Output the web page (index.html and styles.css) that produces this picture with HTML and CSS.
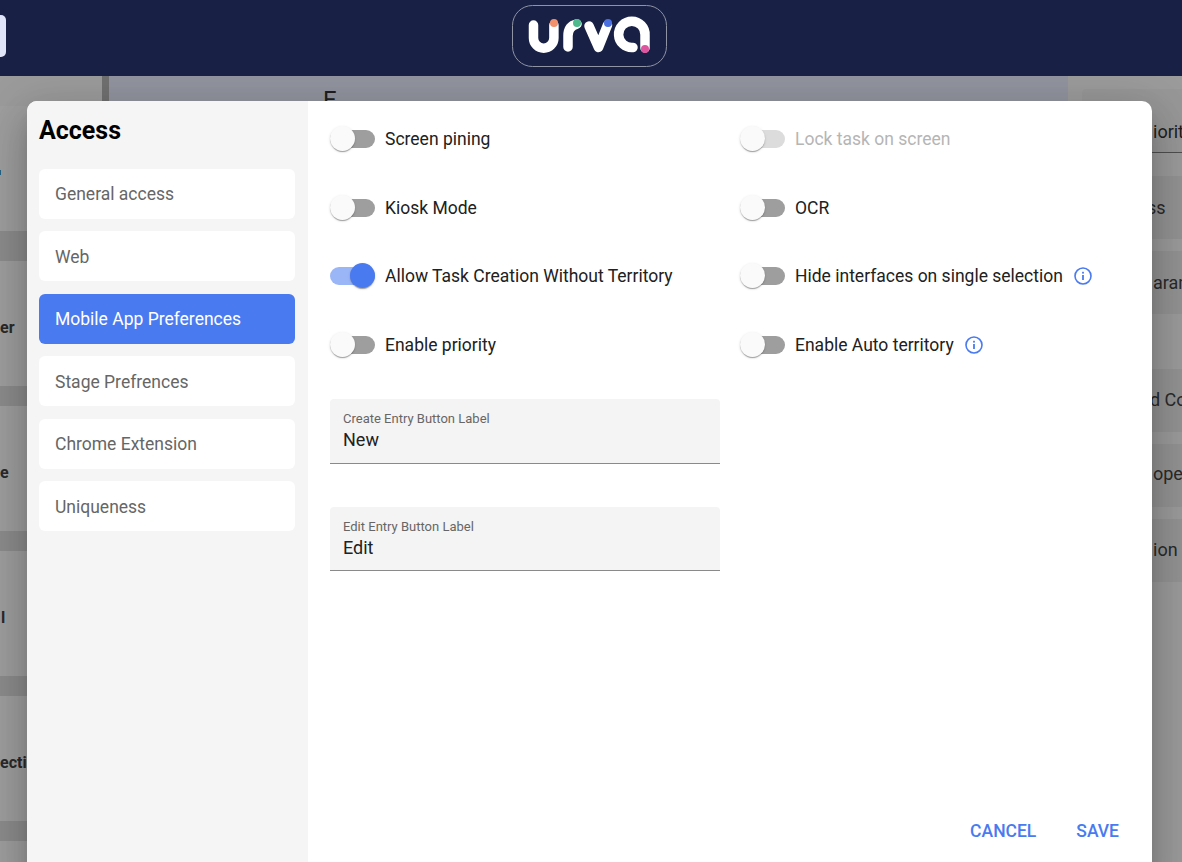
FILE: index.html
```html
<!DOCTYPE html>
<html lang="en">
<head>
<meta charset="utf-8">
<title>Access</title>
<link rel="stylesheet" href="styles.css">
</head>
<body>
<div class="page">
  <header class="topbar">
    <span class="menu-btn"></span>
    <div class="logo" role="img" aria-label="urva">
      <svg width="155" height="62" viewBox="512 5 155 62">
        <rect x="512.5" y="5.5" width="154" height="61" rx="20" fill="none" stroke="#8f93a3" stroke-width="1"/>
        <g fill="none" stroke="#fff" stroke-width="9.5" stroke-linecap="round" stroke-linejoin="round">
          <path d="M533.5 25V38a10.2 10.2 0 0 0 20.4 0V25"/>
          <path d="M568 47V36Q568 26 577 24"/>
          <path d="M589 26L598.500 47.500L607.500 25"/>
          <path d="M633 47.500A13.200 13.200 0 1 1 645 35V48"/>
        </g>
        <circle cx="554" cy="23" r="4" fill="#f2916c"/>
        <circle cx="577" cy="23" r="4" fill="#4fb98e"/>
        <circle cx="608" cy="23" r="4" fill="#4a6fe0"/>
        <circle cx="645" cy="49" r="4" fill="#dd559f"/>
      </svg>
    </div>
  </header>
  <div class="backdrop-content">
    <aside class="bg-left">
      <div class="bg-left-top"></div>
      <div class="bg-card first"><span class="tick"></span></div>
      <div class="bg-strip wide"></div>
      <div class="bg-card"><span>er</span></div>
      <div class="bg-strip"></div>
      <div class="bg-card"><span>e</span></div>
      <div class="bg-strip"></div>
      <div class="bg-card inset"><span>l</span></div>
      <div class="bg-strip"></div>
      <div class="bg-card"><span>ecti</span></div>
      <div class="bg-strip"></div>
      <div class="bg-card"></div>
    </aside>
    <div class="bg-divider"></div>
    <main class="bg-main"><h2 class="bg-heading">E</h2></main>
    <aside class="bg-right">
      <div class="bg-input">iorit</div>
      <div class="bg-band near">ss</div>
      <div class="bg-band gap-after">aram</div>
      <div class="bg-band shift up">d Co</div>
      <div class="bg-band up-more">ope</div>
      <div class="bg-band up">ion</div>
    </aside>
  </div>
  <div class="overlay"></div>

  <section class="modal">
    <nav class="side">
      <h1 class="side-title">Access</h1>
      <ul class="side-list">
        <li class="side-item">General access</li>
        <li class="side-item">Web</li>
        <li class="side-item active">Mobile App Preferences</li>
        <li class="side-item">Stage Prefrences</li>
        <li class="side-item">Chrome Extension</li>
        <li class="side-item">Uniqueness</li>
      </ul>
    </nav>
    <div class="content">
      <div class="switch-grid">
        <label class="row"><span class="switch"><i class="track"></i><i class="thumb"></i></span>Screen pining</label>
        <label class="row disabled"><span class="switch"><i class="track"></i><i class="thumb"></i></span>Lock task on screen</label>
        <label class="row"><span class="switch"><i class="track"></i><i class="thumb"></i></span>Kiosk Mode</label>
        <label class="row"><span class="switch"><i class="track"></i><i class="thumb"></i></span>OCR</label>
        <label class="row on"><span class="switch"><i class="track"></i><i class="thumb"></i></span>Allow Task Creation Without Territory</label>
        <label class="row"><span class="switch"><i class="track"></i><i class="thumb"></i></span>Hide interfaces on single selection
          <svg class="info" viewBox="0 0 18 18" width="18" height="18"><circle cx="9" cy="9" r="8" fill="none" stroke="#4a7af0" stroke-width="1.600"/><rect x="8.100" y="8" width="1.800" height="5" fill="#4a7af0"/><rect x="8.100" y="4.800" width="1.800" height="1.800" fill="#4a7af0"/></svg></label>
        <label class="row"><span class="switch"><i class="track"></i><i class="thumb"></i></span>Enable priority</label>
        <label class="row"><span class="switch"><i class="track"></i><i class="thumb"></i></span>Enable Auto territory
          <svg class="info" viewBox="0 0 18 18" width="18" height="18"><circle cx="9" cy="9" r="8" fill="none" stroke="#4a7af0" stroke-width="1.600"/><rect x="8.100" y="8" width="1.800" height="5" fill="#4a7af0"/><rect x="8.100" y="4.800" width="1.800" height="1.800" fill="#4a7af0"/></svg></label>
      </div>
      <div class="fields">
        <div class="field"><span class="field-label">Create Entry Button Label</span><span class="field-value">New</span></div>
        <div class="field"><span class="field-label">Edit Entry Button Label</span><span class="field-value">Edit</span></div>
      </div>
      <div class="actions">
        <button class="btn" type="button">CANCEL</button>
        <button class="btn" type="button">SAVE</button>
      </div>
    </div>
  </section>
</div>
</body>
</html>
```
FILE: styles.css
```css
* { box-sizing: border-box; }
html, body { margin: 0; padding: 0; height: 100%; overflow: hidden; }
body { font-family: Roboto, "Liberation Sans", sans-serif; color: #212121; background: #fff; }
.page { position: relative; width: 1182px; height: 862px; overflow: hidden; display: flex; flex-direction: column; }

.topbar { position: relative; z-index: 3; height: 76px; flex: none; background: #182145; display: flex; align-items: flex-start; justify-content: center; padding-right: 4px; }
.menu-btn { position: absolute; left: -20px; top: 15px; width: 26px; height: 42px; border-radius: 5px; background: #e0e5fa; }
.logo { margin-top: 5px; height: 62px; }
.logo svg { display: block; }

.backdrop-content { flex: 1; display: flex; min-height: 0; }
.bg-left { width: 102px; flex: none; display: flex; flex-direction: column; background: #fff; font-weight: 700; font-size: 16px; color: #444; }
.bg-left-top { height: 30px; flex: none; background: #fbfbfb; }
.bg-card { height: 125px; flex: none; display: flex; align-items: center; background: #fff; padding-top: 8px; overflow: hidden; }
.bg-card.inset { padding-left: 1px; }
.bg-card span { white-space: nowrap; }
.bg-card.first span.tick { width: 1px; height: 5px; background: #3aa0d8; }
.bg-strip { height: 20px; flex: none; background: #e2e2e2; }
.bg-strip.wide { height: 30px; }
.bg-divider { width: 7px; flex: none; background: #b5b5b5; }
.bg-main { flex: 1; background: #ebefff; padding: 14px 0 0 214px; }
.bg-heading { margin: 0; font-size: 24px; font-weight: 400; line-height: 20px; color: #333; }
.bg-right { width: 114px; flex: none; background: #fafafa; padding: 13px 0 0 14px; display: flex; flex-direction: column; font-size: 18px; color: #444; white-space: nowrap; overflow: hidden; }
.bg-input { height: 64px; flex: none; background: #f4f4f4; border-bottom: 1px solid #808080; border-radius: 4px 0 0 0; padding: 31px 0 0 71px; line-height: 24px; margin-bottom: 23px; color: #333; }
.bg-band { height: 63px; flex: none; background: #eeeeee; display: flex; align-items: center; padding-left: 71px; margin-bottom: 12px; }
.bg-band.near { padding-left: 65px; }
.bg-band.gap-after { margin-bottom: 55px; }
.bg-band.shift { padding-left: 68px; }
.bg-band.up { padding-bottom: 2px; }
.bg-band.up-more { padding-bottom: 4px; }

.overlay { position: absolute; left: 0; right: 0; top: 76px; bottom: 0; z-index: 1; background: rgba(0,0,0,.38); }

.modal { position: absolute; z-index: 2; left: 27px; top: 101px; width: 1125px; height: 790px; background: #fff; border-radius: 10px; display: flex; overflow: hidden; box-shadow: 0 11px 15px -7px rgba(0,0,0,.2), 0 24px 38px 3px rgba(0,0,0,.14), 0 9px 46px 8px rgba(0,0,0,.12); }
.side { width: 281px; flex: none; background: #f5f5f5; padding: 13px 13px 0 12px; }
.side-title { margin: 0 0 21.900px; font-size: 25px; line-height: 33px; font-weight: 700; color: #000; }
.side-list { list-style: none; margin: 0; padding: 0; display: flex; flex-direction: column; gap: 12.500px; }
.side-item { height: 50px; border-radius: 6px; background: #fff; padding: 0.800px 16px 0; display: flex; align-items: center; font-size: 17.500px; color: #666; }
.side-item.active { background: #4a7af0; color: #fff; }

.content { flex: 1; display: flex; flex-direction: column; padding: 14px 25px 42px 22px; }
.switch-grid { display: grid; grid-template-columns: 410px 1fr; grid-auto-rows: 48px; row-gap: 20.500px; }
.row { display: flex; align-items: center; font-size: 17.500px; color: #212121; white-space: nowrap; }
.switch { position: relative; width: 45px; height: 26px; flex: none; margin-right: 10px; display: block; }
.track { position: absolute; left: 0; right: 0; top: 4px; height: 18px; border-radius: 9px; background: #9e9e9e; }
.thumb { position: absolute; left: 0; top: 0; width: 25px; height: 25px; border-radius: 50%; background: #fafafa; box-shadow: 0 2px 1px -1px rgba(0,0,0,.2), 0 1px 1px rgba(0,0,0,.14), 0 1px 3px rgba(0,0,0,.12); }
.row.on .track { background: #9bb6f6; }
.row.on .thumb { left: 20px; background: #4a7af0; }
.row.disabled { color: #b5b5b5; }
.row.disabled .track { background: #dcdcdc; }
.info { flex: none; margin-left: 11px; }

.fields { margin-top: 30.500px; width: 390px; display: flex; flex-direction: column; gap: 43px; }
.field { height: 64.500px; background: #f4f4f4; border-bottom: 1px solid #8a8a8a; border-radius: 4px 4px 0 0; padding: 12.300px 13px 0; display: flex; flex-direction: column; }
.field-label { font-size: 13px; line-height: 15px; color: #666; }
.field-value { font-size: 18px; line-height: 27px; color: #212121; }

.actions { margin-top: auto; display: flex; justify-content: flex-end; gap: 24px; }
.btn { height: 36px; padding: 0 8px; border: 0; background: none; font: 500 17.500px Roboto, sans-serif; color: #4a7af0; }
```
